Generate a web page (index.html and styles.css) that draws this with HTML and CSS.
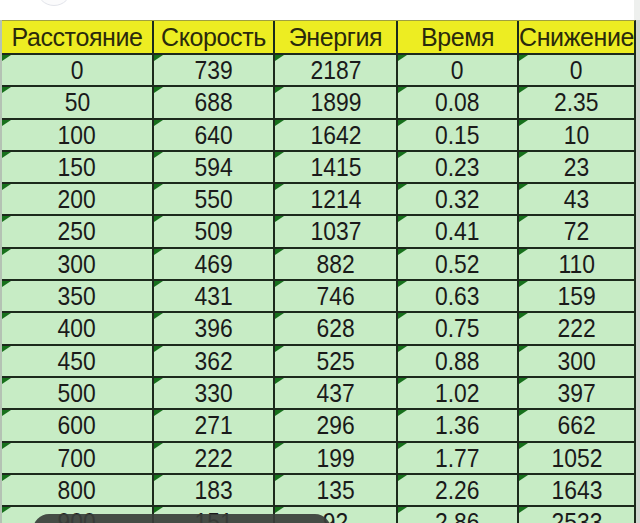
FILE: index.html
```html
<!DOCTYPE html>
<html lang="ru">
<head>
<meta charset="utf-8">
<title>Таблица</title>
<link rel="stylesheet" href="styles.css">
</head>
<body>
<div class="top">
  <div class="ghost-circle"></div>
</div>
<div class="sheet">
  <div class="edge-left"></div>
  <div class="grid">
    <div class="cell head">Расстояние</div>
    <div class="cell head">Скорость</div>
    <div class="cell head">Энергия</div>
    <div class="cell head">Время</div>
    <div class="cell head">Снижение</div>

    <div class="cell"><span>0</span></div><div class="cell"><span>739</span></div><div class="cell"><span>2187</span></div><div class="cell"><span>0</span></div><div class="cell"><span>0</span></div>
    <div class="cell"><span>50</span></div><div class="cell"><span>688</span></div><div class="cell"><span>1899</span></div><div class="cell"><span>0.08</span></div><div class="cell"><span>2.35</span></div>
    <div class="cell"><span>100</span></div><div class="cell"><span>640</span></div><div class="cell"><span>1642</span></div><div class="cell"><span>0.15</span></div><div class="cell"><span>10</span></div>
    <div class="cell"><span>150</span></div><div class="cell"><span>594</span></div><div class="cell"><span>1415</span></div><div class="cell"><span>0.23</span></div><div class="cell"><span>23</span></div>
    <div class="cell"><span>200</span></div><div class="cell"><span>550</span></div><div class="cell"><span>1214</span></div><div class="cell"><span>0.32</span></div><div class="cell"><span>43</span></div>
    <div class="cell"><span>250</span></div><div class="cell"><span>509</span></div><div class="cell"><span>1037</span></div><div class="cell"><span>0.41</span></div><div class="cell"><span>72</span></div>
    <div class="cell"><span>300</span></div><div class="cell"><span>469</span></div><div class="cell"><span>882</span></div><div class="cell"><span>0.52</span></div><div class="cell"><span>110</span></div>
    <div class="cell"><span>350</span></div><div class="cell"><span>431</span></div><div class="cell"><span>746</span></div><div class="cell"><span>0.63</span></div><div class="cell"><span>159</span></div>
    <div class="cell"><span>400</span></div><div class="cell"><span>396</span></div><div class="cell"><span>628</span></div><div class="cell"><span>0.75</span></div><div class="cell"><span>222</span></div>
    <div class="cell"><span>450</span></div><div class="cell"><span>362</span></div><div class="cell"><span>525</span></div><div class="cell"><span>0.88</span></div><div class="cell"><span>300</span></div>
    <div class="cell"><span>500</span></div><div class="cell"><span>330</span></div><div class="cell"><span>437</span></div><div class="cell"><span>1.02</span></div><div class="cell"><span>397</span></div>
    <div class="cell"><span>600</span></div><div class="cell"><span>271</span></div><div class="cell"><span>296</span></div><div class="cell"><span>1.36</span></div><div class="cell"><span>662</span></div>
    <div class="cell"><span>700</span></div><div class="cell"><span>222</span></div><div class="cell"><span>199</span></div><div class="cell"><span>1.77</span></div><div class="cell"><span>1052</span></div>
    <div class="cell"><span>800</span></div><div class="cell"><span>183</span></div><div class="cell"><span>135</span></div><div class="cell"><span>2.26</span></div><div class="cell"><span>1643</span></div>
    <div class="cell"><span>900</span></div><div class="cell"><span>151</span></div><div class="cell"><span>92</span></div><div class="cell"><span>2.86</span></div><div class="cell"><span>2533</span></div>
  </div>
  <div class="edge-right"></div>
</div>
<div class="toast"></div>
</body>
</html>
```
FILE: styles.css
```css
html, body {
  margin: 0;
  padding: 0;
  background: #ffffff;
  overflow: hidden;
  height: 523px;
}
body {
  position: relative;
  font-family: "Liberation Sans", Arial, sans-serif;
}
.top {
  height: 20px;
  position: relative;
  background: linear-gradient(to right, #ffffff 0, #ffffff 634px, #eef0ee 634px);
}
.ghost-circle {
  position: absolute;
  left: 36px;
  top: -30px;
  width: 34px;
  height: 34px;
  border-radius: 50%;
  border: 1px solid #e2e4ea;
  background: #fbfbfc;
}
.sheet {
  display: flex;
  align-items: flex-start;
}
.edge-left {
  width: 2px;
  align-self: stretch;
  background: #b4c2b4;
}
.edge-right {
  flex: 1;
  align-self: stretch;
  background: #cfd6cf;
}
.grid {
  display: grid;
  grid-template-columns: 150px 119px 121px 119px 115px;
  grid-template-rows: 32px;
  grid-auto-rows: 30.3px;
  gap: 2px;
  background: #1c2a1c;
  border-right: 2px solid #1c2a1c;
  border-top: 1px solid #a0a040;
}
.cell {
  position: relative;
  background: #c7ecc5;
  color: #1a1a1a;
  font-size: 26px;
  line-height: 30px;
  text-align: center;
  white-space: nowrap;
  overflow: hidden;
}
.cell span {
  display: inline-block;
  transform: scaleX(0.88);
}
.cell::before {
  content: "";
  position: absolute;
  left: 0;
  top: 0;
  border-top: 6px solid #17701c;
  border-right: 9px solid transparent;
}
.cell.head {
  background: #eded22;
  color: #2a2a0c;
  font-size: 25px;
  letter-spacing: -0.4px;
  line-height: 32px;
}
.cell.head::before {
  display: none;
}
.toast {
  position: absolute;
  left: 33px;
  top: 514px;
  width: 298px;
  height: 40px;
  border-radius: 16px;
  background: rgba(58, 62, 58, 0.92);
}
```
